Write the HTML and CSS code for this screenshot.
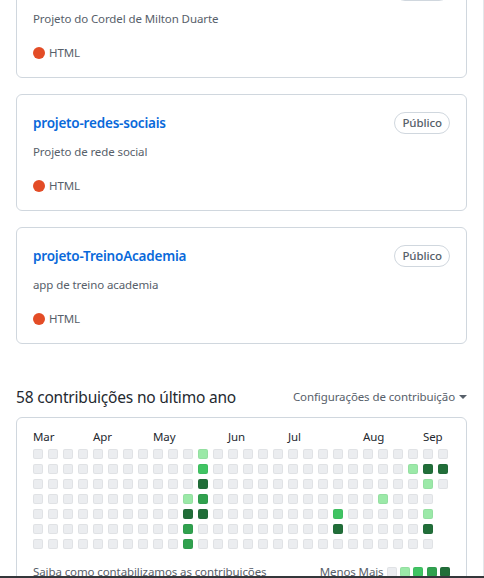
FILE: index.html
```html
<!DOCTYPE html>
<html lang="pt-BR">
<head>
<meta charset="utf-8">
<title>Perfil</title>
<link rel="stylesheet" href="styles.css">
</head>
<body>
<div class="page">
  <ol class="pinned">
    <li class="repo-card">
      <div class="repo-head"><a class="repo-name" href="#">projeto-cordel</a><span class="pill">Público</span></div>
      <p class="repo-desc">Projeto do Cordel de Milton Duarte</p>
      <p class="repo-lang"><span class="lang-dot"></span>HTML</p>
    </li>
    <li class="repo-card">
      <div class="repo-head"><a class="repo-name" href="#">projeto-redes-sociais</a><span class="pill">Público</span></div>
      <p class="repo-desc">Projeto de rede social</p>
      <p class="repo-lang"><span class="lang-dot"></span>HTML</p>
    </li>
    <li class="repo-card">
      <div class="repo-head"><a class="repo-name" href="#">projeto-TreinoAcademia</a><span class="pill">Público</span></div>
      <p class="repo-desc">app de treino academia</p>
      <p class="repo-lang"><span class="lang-dot"></span>HTML</p>
    </li>
  </ol>

  <section class="contrib">
    <div class="contrib-head">
      <h2 class="contrib-title">58 contribuições no último ano</h2>
      <span class="contrib-settings">Configurações de contribuição<span class="caret"></span></span>
    </div>
    <div class="cal-box">
      <div class="months">
        <span class="m-mar">Mar</span>
        <span class="m-apr">Apr</span>
        <span class="m-may">May</span>
        <span class="m-jun">Jun</span>
        <span class="m-jul">Jul</span>
        <span class="m-aug">Aug</span>
        <span class="m-sep">Sep</span>
      </div>
      <div class="cal-grid">
        <div class="week"><i></i><i></i><i></i><i></i><i></i><i></i><i></i></div>
        <div class="week"><i></i><i></i><i></i><i></i><i></i><i></i><i></i></div>
        <div class="week"><i></i><i></i><i></i><i></i><i></i><i></i><i></i></div>
        <div class="week"><i></i><i></i><i></i><i></i><i></i><i></i><i></i></div>
        <div class="week"><i></i><i></i><i></i><i></i><i></i><i></i><i></i></div>
        <div class="week"><i></i><i></i><i></i><i></i><i></i><i></i><i></i></div>
        <div class="week"><i></i><i></i><i></i><i></i><i></i><i></i><i></i></div>
        <div class="week"><i></i><i></i><i></i><i></i><i></i><i></i><i></i></div>
        <div class="week"><i></i><i></i><i></i><i></i><i></i><i></i><i></i></div>
        <div class="week"><i></i><i></i><i></i><i></i><i></i><i></i><i></i></div>
        <div class="week"><i></i><i></i><i></i><i class="l1"></i><i class="l4"></i><i class="l3"></i><i class="l3"></i></div>
        <div class="week"><i class="l1"></i><i class="l2"></i><i class="l4"></i><i class="l3"></i><i class="l4"></i><i></i><i></i></div>
        <div class="week"><i></i><i></i><i></i><i></i><i></i><i></i><i></i></div>
        <div class="week"><i></i><i></i><i></i><i></i><i></i><i></i><i></i></div>
        <div class="week"><i></i><i></i><i></i><i></i><i></i><i></i><i></i></div>
        <div class="week"><i></i><i></i><i></i><i></i><i></i><i></i><i></i></div>
        <div class="week"><i></i><i></i><i></i><i></i><i></i><i></i><i></i></div>
        <div class="week"><i></i><i></i><i></i><i></i><i></i><i></i><i></i></div>
        <div class="week"><i></i><i></i><i></i><i></i><i></i><i></i><i></i></div>
        <div class="week"><i></i><i></i><i></i><i></i><i></i><i></i><i></i></div>
        <div class="week"><i></i><i></i><i></i><i></i><i class="l2"></i><i class="l4"></i><i></i></div>
        <div class="week"><i></i><i></i><i></i><i></i><i></i><i></i><i></i></div>
        <div class="week"><i></i><i></i><i></i><i></i><i></i><i></i><i></i></div>
        <div class="week"><i></i><i></i><i></i><i class="l1"></i><i></i><i></i><i></i></div>
        <div class="week"><i></i><i></i><i></i><i></i><i></i><i></i><i></i></div>
        <div class="week"><i></i><i class="l1"></i><i></i><i></i><i></i><i></i><i></i></div>
        <div class="week"><i></i><i class="l4"></i><i class="l1"></i><i></i><i class="l1"></i><i class="l4"></i><i></i></div>
        <div class="week"><i></i><i class="l4"></i><i></i></div>
      </div>
      <div class="cal-footer">
        <a class="learn" href="#">Saiba como contabilizamos as contribuições</a>
        <div class="legend">
          <span class="legend-text">Menos Mais</span>
          <i></i><i class="l1"></i><i class="l2"></i><i class="l3"></i><i class="l4"></i>
        </div>
      </div>
    </div>
  </section>
</div>
<div class="taskbar"></div>
</body>
</html>
```

FILE: styles.css
```css
html, body {
  margin: 0;
  padding: 0;
  background: #ffffff;
}

body {
  font-family: "Noto Sans", "Open Sans", sans-serif;
  color: #24292f;
  overflow: hidden;
}

.page {
  box-sizing: border-box;
  width: 484px;
  min-height: 100vh;
  padding: 0 16px;
  border-right: 1px solid #e4e7ea;
}

/* pinned repositories */
.pinned {
  list-style: none;
  margin: -39px 0 0;
  padding: 0;
  display: flex;
  flex-direction: column;
  gap: 16px;
}

.repo-card {
  border: 1px solid #d0d7de;
  border-radius: 6px;
  padding: 16px;
  display: flex;
  flex-direction: column;
}

.repo-head {
  height: 24px;
  display: flex;
  align-items: center;
  justify-content: space-between;
}

.repo-name {
  font-size: 13.5px;
  font-weight: 600;
  letter-spacing: -0.2px;
  color: #0969da;
  text-decoration: none;
}

.pill {
  box-sizing: border-box;
  height: 22px;
  padding: 0 7px;
  border: 1px solid #d0d7de;
  border-radius: 2em;
  font-size: 11.5px;
  font-weight: 500;
  letter-spacing: -0.1px;
  line-height: 20px;
  color: #57606a;
}

.repo-desc {
  margin: 8px 0 0;
  font-size: 11.5px;
  letter-spacing: -0.1px;
  line-height: 18px;
  color: #57606a;
}

.repo-lang {
  margin: 16px 0 0;
  display: flex;
  align-items: center;
  gap: 4px;
  font-size: 11.5px;
  letter-spacing: -0.1px;
  line-height: 17px;
  color: #57606a;
}

.lang-dot {
  width: 12px;
  height: 12px;
  border-radius: 50%;
  background: #e34c26;
}

/* contributions */
.contrib {
  margin-top: 41px;
}

.contrib-head {
  display: flex;
  align-items: center;
  justify-content: space-between;
  margin-bottom: 8px;
}

.contrib-title {
  margin: 0;
  font-size: 15.5px;
  font-weight: 400;
  letter-spacing: -0.2px;
  line-height: 24px;
  color: #24292f;
}

.contrib-settings {
  display: flex;
  align-items: center;
  font-size: 11.5px;
  letter-spacing: -0.1px;
  line-height: 18px;
  color: #57606a;
}

.caret {
  margin-left: 4px;
  width: 0;
  height: 0;
  border-top: 4px solid #57606a;
  border-left: 4px solid transparent;
  border-right: 4px solid transparent;
}

.cal-box {
  border: 1px solid #d0d7de;
  border-radius: 6px;
  padding: 10px 16px 16px;
}

.months {
  display: grid;
  grid-template-columns: repeat(28, 10px);
  column-gap: 5px;
  height: 18px;
  margin-bottom: 3px;
  font-size: 11.5px;
  letter-spacing: -0.1px;
  line-height: 18px;
  color: #24292f;
  white-space: nowrap;
}

.m-mar { grid-column: 1 / span 4; }
.m-apr { grid-column: 5 / span 4; }
.m-may { grid-column: 9 / span 5; }
.m-jun { grid-column: 14 / span 4; }
.m-jul { grid-column: 18 / span 5; }
.m-aug { grid-column: 23 / span 4; }
.m-sep { grid-column: 27 / span 2; }

.cal-grid {
  display: flex;
  gap: 5px;
}

.week {
  display: flex;
  flex-direction: column;
  gap: 5px;
}

.cal-grid i,
.legend i {
  display: block;
  box-sizing: border-box;
  width: 10px;
  height: 10px;
  border-radius: 2px;
  background: #ebedf0;
  border: 1px solid rgba(27, 31, 35, 0.05);
}

.cal-grid i.l1, .legend i.l1 { background: #9be9a8; }
.cal-grid i.l2, .legend i.l2 { background: #40c463; }
.cal-grid i.l3, .legend i.l3 { background: #30a14e; }
.cal-grid i.l4, .legend i.l4 { background: #216e39; }

.cal-footer {
  margin-top: 14px;
  display: flex;
  align-items: center;
  justify-content: space-between;
  font-size: 11.5px;
  letter-spacing: -0.1px;
  line-height: 18px;
  color: #57606a;
}

.learn {
  color: #57606a;
  text-decoration: none;
}

.legend {
  display: flex;
  align-items: center;
  gap: 3.3px;
}

.taskbar {
  position: fixed;
  left: 0;
  right: 0;
  bottom: 0;
  height: 2px;
  background: #34363a;
}
```
